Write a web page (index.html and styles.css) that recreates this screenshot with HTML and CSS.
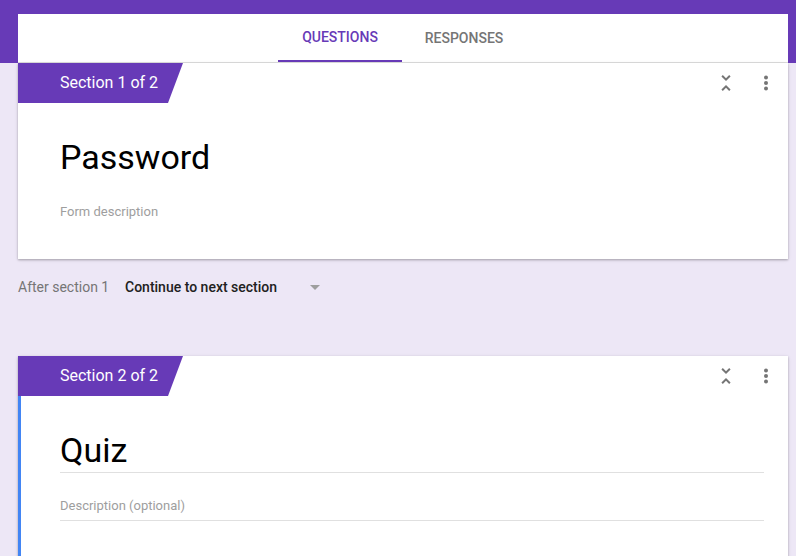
FILE: index.html
```html
<!DOCTYPE html>
<html lang="en">
<head>
  <meta charset="UTF-8">
  <meta name="viewport" content="width=device-width, initial-scale=1.0">
  <title>Password - Form editor</title>
  <link rel="stylesheet" href="styles.css">
</head>
<body>

  <div class="top">
    <nav class="tabs">
      <a class="tab active" href="#">Questions</a>
      <a class="tab" href="#">Responses</a>
    </nav>
  </div>

  <main class="page">

    <section class="card">
      <div class="card-head">
        <div class="section-tag">Section 1 of 2</div>
        <div class="card-tools">
          <svg class="icon" viewBox="0 0 24 24"><path d="M7.41 18.59L8.83 20 12 16.83 15.17 20l1.41-1.41L12 14l-4.59 4.59zm9.18-13.18L15.17 4 12 7.17 8.83 4 7.41 5.41 12 10l4.59-4.59z"/></svg>
          <svg class="icon" viewBox="0 0 24 24"><circle cx="12" cy="6.5" r="2"/><circle cx="12" cy="12" r="2"/><circle cx="12" cy="17.5" r="2"/></svg>
        </div>
      </div>
      <div class="card-body">
        <div class="form-title">Password</div>
        <div class="form-desc">Form description</div>
      </div>
    </section>

    <div class="after-section">
      <span class="after-label">After section 1</span>
      <span class="after-select">
        Continue to next section
        <span class="caret"></span>
      </span>
    </div>

    <section class="card">
      <div class="card-head">
        <div class="section-tag">Section 2 of 2</div>
        <div class="card-tools">
          <svg class="icon" viewBox="0 0 24 24"><path d="M7.41 18.59L8.83 20 12 16.83 15.17 20l1.41-1.41L12 14l-4.59 4.59zm9.18-13.18L15.17 4 12 7.17 8.83 4 7.41 5.41 12 10l4.59-4.59z"/></svg>
          <svg class="icon" viewBox="0 0 24 24"><circle cx="12" cy="6.5" r="2"/><circle cx="12" cy="12" r="2"/><circle cx="12" cy="17.5" r="2"/></svg>
        </div>
      </div>
      <div class="card-body editing">
        <div class="field field-title">Quiz</div>
        <div class="field field-desc">Description (optional)</div>
      </div>
    </section>

  </main>

</body>
</html>
```

FILE: styles.css
```css
body {
  margin: 0;
  background-color: #ede7f6;
  font-family: Roboto, "Liberation Sans", Arial, sans-serif;
  color: #212121;
  overflow: hidden;
}

.top {
  background-color: #673ab7;
  padding: 14px 8px 0 18px;
}

.tabs {
  display: flex;
  justify-content: center;
  height: 48px;
  padding-right: 2px;
  background-color: white;
  border-bottom: 1px solid #e0e0e0;
}

.tab {
  width: 124px;
  box-sizing: border-box;
  padding-top: 1px;
  line-height: 47px;
  text-align: center;
  text-decoration: none;
  text-transform: uppercase;
  font-size: 14px;
  font-weight: 500;
  color: #757575;
}

.tab.active {
  color: #673ab7;
  border-bottom: 2px solid #673ab7;
  line-height: 45px;
}

.page {
  padding: 0 8px 0 18px;
}

.card {
  background-color: white;
  box-shadow: 0 1px 2px rgba(0, 0, 0, 0.25), 0 1px 4px rgba(0, 0, 0, 0.1);
}

.card-head {
  display: flex;
  align-items: center;
  justify-content: space-between;
}

.section-tag {
  width: 165px;
  height: 40px;
  box-sizing: border-box;
  padding-left: 42px;
  line-height: 40px;
  font-size: 16px;
  color: white;
  background-color: #673ab7;
  clip-path: polygon(0 0, 165px 0, 150px 100%, 0 100%);
}

.card-tools {
  display: flex;
  gap: 16px;
  padding-right: 10px;
}

.icon {
  width: 24px;
  height: 24px;
  fill: #757575;
}

.card-body {
  padding: 34px 24px 37px 42px;
}

.form-title {
  font-size: 34px;
  line-height: 40px;
  color: black;
}

.form-desc {
  margin-top: 25px;
  font-size: 13px;
  line-height: 20px;
  color: #9e9e9e;
}

.after-section {
  display: flex;
  align-items: center;
  margin: 18px 0 59px;
  font-size: 14px;
  line-height: 20px;
}

.after-label {
  color: #757575;
  width: 107px;
}

.after-select {
  display: flex;
  align-items: center;
  gap: 33px;
  font-weight: 500;
  color: #212121;
}

.caret {
  width: 0;
  height: 0;
  border-left: 5px solid transparent;
  border-right: 5px solid transparent;
  border-top: 5px solid #9e9e9e;
}

.card-body.editing {
  border-left: 3px solid #4285f4;
  padding: 34px 24px 40px 39px;
}

.field {
  border-bottom: 1px solid #e0e0e0;
}

.field-title {
  font-size: 34px;
  line-height: 40px;
  padding-bottom: 2px;
  color: black;
}

.field-desc {
  margin-top: 23px;
  font-size: 13px;
  line-height: 20px;
  padding-bottom: 4px;
  color: #9e9e9e;
}
```
